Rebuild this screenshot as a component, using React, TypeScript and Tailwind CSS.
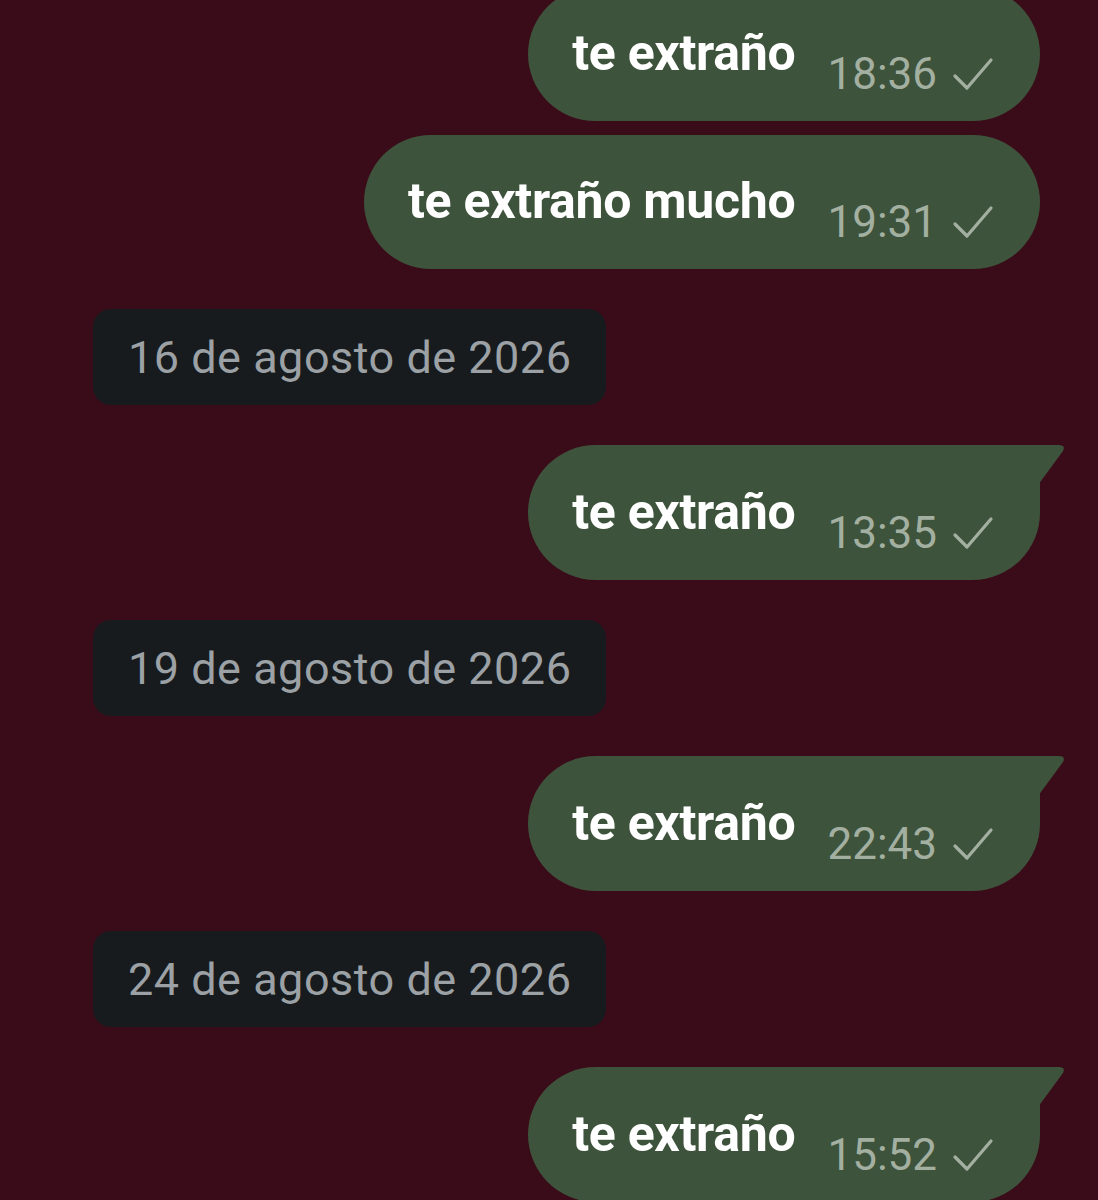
import React from "react";

type Item =
  | { kind: "msg"; text: string; time: string; tail?: boolean; h: string }
  | { kind: "date"; text: string };

const items: Item[] = [
  { kind: "msg", text: "te extraño", time: "18:36", h: "h-[134px]" },
  { kind: "msg", text: "te extraño mucho", time: "19:31", h: "h-[134px]" },
  { kind: "date", text: "16 de agosto de 2026" },
  { kind: "msg", text: "te extraño", time: "13:35", tail: true, h: "h-[135px]" },
  { kind: "date", text: "19 de agosto de 2026" },
  { kind: "msg", text: "te extraño", time: "22:43", tail: true, h: "h-[135px]" },
  { kind: "date", text: "24 de agosto de 2026" },
  { kind: "msg", text: "te extraño", time: "15:52", tail: true, h: "h-[135px]" },
];

const Check = () => (
  <svg width="42" height="34" viewBox="0 0 42 34" fill="none" className="ml-[15px]">
    <path d="M3 19 L15 31 L39 3" stroke="#a3b0a1" strokeWidth="3.2" strokeLinecap="round" strokeLinejoin="round" />
  </svg>
);

const Bubble = ({ text, time, tail, h }: { text: string; time: string; tail?: boolean; h: string }) => (
  <div className="flex justify-end pr-[58px]">
    <div
      className={`relative flex items-center ${h} bg-[#3e533b] pl-[44px] pr-[46px] rounded-[68px] ${
        tail ? "rounded-tr-none" : ""
      }`}
    >
      {tail && (
        <svg
          width="28"
          height="42"
          viewBox="0 0 28 42"
          className="absolute top-0 right-[-26px]"
        >
          <path d="M0 0 H21 Q28 0 25 6 L0 40 Z" fill="#3e533b" />
        </svg>
      )}
      <span className="text-[50px] font-bold text-white tracking-[-0.3px] leading-none -mt-[2px]">{text}</span>
      <span className="flex items-center pt-[40px] ml-[32px]">
        <span className="text-[44px] text-[#a3b0a1] leading-none">{time}</span>
        <Check />
      </span>
    </div>
  </div>
);

const DateChip = ({ text }: { text: string }) => (
  <div className="flex pl-[93px]">
    <div className="flex items-center h-[96px] px-[35px] rounded-[18px] bg-[#171b1e]">
      <span className="text-[45px] text-[#9ca1a5] tracking-[0.5px] leading-none">{text}</span>
    </div>
  </div>
);

export default function App() {
  return (
    <div
      className="w-[1098px] h-[1200px] overflow-hidden bg-[#3a0c19]"
      style={{ fontFamily: "Roboto, 'Liberation Sans', sans-serif" }}
    >
      <div className="flex flex-col -mt-[13px]">
        {items.map((it, i) => {
          const gap = i === 0 ? "" : i === 1 ? "mt-[14px]" : "mt-[40px]";
          return (
            <div key={i} className={gap}>
              {it.kind === "msg" ? (
                <Bubble text={it.text} time={it.time} tail={it.tail} h={it.h} />
              ) : (
                <DateChip text={it.text} />
              )}
            </div>
          );
        })}
      </div>
    </div>
  );
}
